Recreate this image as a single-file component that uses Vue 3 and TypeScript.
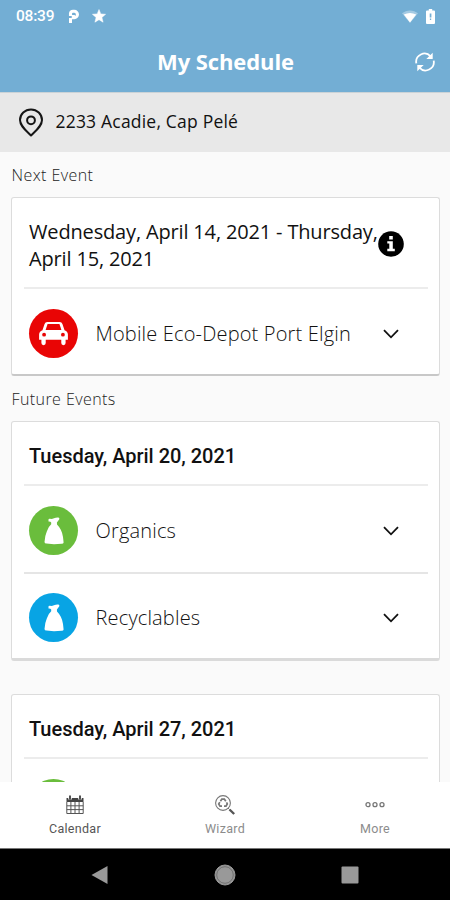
<script setup lang="ts">
interface Pickup {
  name?: string
  color: string
  kind: 'car' | 'bag'
}
interface EventDay {
  date: string
  pickups: Pickup[]
}

const nextEvent: EventDay = {
  date: 'Wednesday, April 14, 2021 - Thursday, April 15, 2021',
  pickups: [{ name: 'Mobile Eco-Depot Port Elgin', color: '#e90505', kind: 'car' }],
}

const futureEvents: EventDay[] = [
  {
    date: 'Tuesday, April 20, 2021',
    pickups: [
      { name: 'Organics', color: '#6abd3c', kind: 'bag' },
      { name: 'Recyclables', color: '#08a4e4', kind: 'bag' },
    ],
  },
  {
    date: 'Tuesday, April 27, 2021',
    pickups: [{ color: '#6abd3c', kind: 'bag' }],
  },
]
</script>

<template>
  <div class="phone">
    <header class="top">
      <div class="status">
        <span class="clock">08:39</span>
        <svg class="parking" width="12" height="15" viewBox="0 0 12 15">
          <path d="M2.500 14V9" fill="none" stroke="#fff" stroke-width="3" />
          <path d="M2.500 7V4.500A2.500 2.500 0 0 1 5 2.300H6.300A3.100 3.100 0 0 1 6.300 8.600H5.300V6" fill="none" stroke="#fff" stroke-width="3.100" />
        </svg>
        <svg class="star" width="14" height="14" viewBox="0 0 14 14">
          <path d="M7 .5 8.800 4.900l4.800.4-3.700 3.100 1.200 4.800L7 10.700l-4.100 2.500 1.200-4.800L.4 5.300l4.800-.4z" fill="#fff" stroke="#fff" stroke-width=".5" />
        </svg>
        <span class="spacer"></span>
        <svg class="wifi" width="16" height="13" viewBox="0 0 16 13">
          <path d="M0 3.300C4.500-.6 11.500-.6 16 3.300L8 13z" fill="#fff" opacity=".35" />
          <path d="M1.800 4.500Q8 1.300 14.200 4.500L8 12.500z" fill="#fff" />
        </svg>
        <svg class="battery" width="9" height="15" viewBox="0 0 9 15">
          <path d="M2.800 0h3.400v1.500H8A1 1 0 0 1 9 2.500V14a1 1 0 0 1-1 1H1a1 1 0 0 1-1-1V2.500a1 1 0 0 1 1-1h1.800z" fill="#fff" />
          <path d="M3.700 4.500h1.700v4H3.700zM3.900 9.500h1.300V11H3.900z" fill="#73aed4" />
        </svg>
      </div>
      <div class="titlebar">
        <h1>My Schedule</h1>
        <svg class="refresh" width="20" height="20" viewBox="0 0 20 20">
          <g fill="none" stroke="#fff" stroke-width="1.800">
            <path d="M1.300 11.300A8.300 8.300 0 0 1 15.600 4.300" />
            <path d="M18.700 8.700A8.300 8.300 0 0 1 4.400 15.700" />
          </g>
          <path d="M17.700.7v6.400h-6.400zM2.300 19.300v-6.400h6.400z" fill="#fff" />
        </svg>
      </div>
    </header>

    <div class="address">
      <svg width="26" height="30" viewBox="0 0 26 30">
        <g fill="none" stroke="#161616" stroke-width="2">
          <path d="M13 27.500C8 22.500 2 18 2 12.100a11 10.700 0 0 1 22 0C24 18 18 22.500 13 27.500z" stroke-linejoin="round" />
          <circle cx="13" cy="12.300" r="3.900" />
        </g>
      </svg>
      <span>2233 Acadie, Cap Pelé</span>
    </div>

    <main class="list">
      <h2 class="section">Next Event</h2>
      <section class="card next">
        <div class="date range">
          <span class="range-text">{{ nextEvent.date }}</span>
          <svg class="info" width="26" height="26" viewBox="0 0 26 26">
            <circle cx="13" cy="13" r="12.800" fill="#000" />
            <path d="M11.200 5h3.600v3.500h-3.600zM9.300 10.200h5.500v7.600h2v2.400H9.300v-2.400h2v-5.200h-2z" fill="#fff" />
          </svg>
        </div>
        <div v-for="p in nextEvent.pickups" :key="p.name" class="row">
          <span class="badge" :style="{ background: p.color }">
            <svg width="29" height="24" viewBox="0 0 30 25">
              <path d="M8.500 0h13a3 3 0 0 1 2.800 2l2.200 6.500Q30 9.800 30 13v5.500h-2.400V22a2.200 2.200 0 0 1-4.500 0v-3.500H6.900V22a2.200 2.200 0 0 1-4.500 0v-3.500H0V13Q0 9.800 3.500 8.500L5.700 2a3 3 0 0 1 2.800-2z" fill="#fff" />
              <path d="M8.800 2.200h12.400l2 6.100H6.800z" :fill="p.color" />
              <circle cx="5.200" cy="13.200" r="2" :fill="p.color" />
              <circle cx="24.800" cy="13.200" r="2" :fill="p.color" />
            </svg>
          </span>
          <span class="name">{{ p.name }}</span>
          <svg class="chevron" width="16" height="10" viewBox="0 0 16 10"><path d="M1 1.200 8 8.300 15 1.200" /></svg>
        </div>
      </section>

      <h2 class="section">Future Events</h2>
      <section v-for="day in futureEvents" :key="day.date" class="card">
        <div class="date single">{{ day.date }}</div>
        <div v-for="p in day.pickups" :key="p.color" class="row">
          <span class="badge" :style="{ background: p.color }">
            <svg width="20" height="28" viewBox="0 0 20 28">
              <path d="M4.500 3Q4.200 1.600 6 1.800 8 2.300 10 1.200 12 .4 14 .5 15.800.3 15.300 2.200L12.900 5.600 13 7.500Q18 12.500 19 20L19.600 25.500Q19.500 26.800 17.500 26.700L10 27.300 2.500 26.500Q.5 26.500.5 25 .8 19 2.800 14.500 4.500 9.500 7.200 7.300V5.500Q6.500 4.300 4.500 4.500z" fill="#fff" />
            </svg>
          </span>
          <span class="name">{{ p.name }}</span>
          <svg class="chevron" width="16" height="10" viewBox="0 0 16 10"><path d="M1 1.200 8 8.300 15 1.200" /></svg>
        </div>
      </section>
    </main>

    <nav class="tabs">
      <div class="tab active">
        <svg width="18" height="20" viewBox="0 0 18 20">
          <path d="M.5 3h17v4H.5z" fill="#444" />
          <path d="M4 .5v4M14 .5v4" stroke="#fff" stroke-width="3.500" />
          <path d="M4 .5v4M14 .5v4" stroke="#333" stroke-width="1.700" />
          <path d="M.8 7v11.500h16.400V7M.8 10.800h16.400M.8 14.600h16.400M4.900 7v11.500M9 7v11.500M13.100 7v11.500" fill="none" stroke="#555" stroke-width="1" />
        </svg>
        <span>Calendar</span>
      </div>
      <div class="tab wizard">
        <svg width="22" height="20" viewBox="0 0 22 20">
          <g fill="none" stroke="#777">
            <circle cx="9" cy="8" r="7.400" stroke-width="1.100" />
            <path d="M6.400 6.200 7.800 4.200h2.600l1.400 2M12.500 7.300l.8 1.700-1.300 2.200h-2M8 11.200H6L4.700 9l1.100-1.900" stroke-width="1.700" />
            <path d="m14 13 1.500 1.500" stroke-width="1" />
            <path d="m15.500 14.500 4.700 4.500" stroke="#555" stroke-width="2.400" />
          </g>
        </svg>
        <span>Wizard</span>
      </div>
      <div class="tab more">
        <svg width="20" height="20" viewBox="0 0 20 20">
          <g fill="none" stroke="#777" stroke-width="1.300">
            <circle cx="3" cy="9.700" r="2" /><circle cx="10" cy="9.700" r="2" /><circle cx="17" cy="9.700" r="2" />
          </g>
        </svg>
        <span>More</span>
      </div>
    </nav>

    <div class="system">
      <div><svg width="18" height="20" viewBox="0 0 18 20"><path d="M.5 10 16.500 1v18z" fill="#999" /></svg></div>
      <div>
        <svg width="22" height="22" viewBox="0 0 22 22">
          <circle cx="11" cy="11" r="10" fill="#999" stroke="#999" />
          <circle cx="11" cy="11" r="8.300" fill="none" stroke="#666" stroke-width=".8" />
        </svg>
      </div>
      <div><svg width="18" height="18" viewBox="0 0 18 18"><rect x=".5" y=".5" width="17" height="17" rx="1" fill="#999" /></svg></div>
    </div>
  </div>
</template>

<style>
body {
  margin: 0;
}
</style>

<style scoped>
.phone {
  width: 450px;
  height: 900px;
  display: flex;
  flex-direction: column;
  overflow: hidden;
  background: #fafafa;
  color: #111;
  font-family: 'Open Sans', 'Noto Sans', sans-serif;
}
svg {
  display: block;
  flex: none;
}
.top {
  height: 92px;
  flex: none;
  background: #73aed4;
  color: #fff;
}
.status {
  height: 32px;
  display: flex;
  align-items: center;
  padding: 0 15px 0 16px;
}
.clock {
  font: 500 15.500px/32px Roboto, sans-serif;
  letter-spacing: -0.200px;
  width: 52px;
}
.star {
  margin-left: 12px;
}
.spacer {
  flex: 1;
}
.battery {
  margin-left: 8px;
}
.titlebar {
  height: 60px;
  display: grid;
  grid-template-columns: 1fr auto 1fr;
  align-items: center;
  padding: 0 15px 0 16px;
}
h1 {
  grid-column: 2;
  margin: 0;
  font-size: 22px;
  line-height: 59px;
  height: 60px;
  font-weight: 700;
  letter-spacing: -0.100px;
}
.refresh {
  justify-self: end;
}
.address {
  height: 60px;
  flex: none;
  display: flex;
  align-items: center;
  gap: 11.500px;
  padding-left: 18px;
  box-sizing: border-box;
  background: #e8e8e8;
  border-top: 1px solid #cbd3d7;
  font-size: 17.500px;
  letter-spacing: 0.200px;
  line-height: 24px;
}
.address span {
  margin-top: -4px;
}
.list {
  flex: 1;
  min-height: 0;
  overflow: hidden;
  padding: 0 10px 0 11px;
}
.section {
  margin: 0 0 0 0.500px;
  height: 45px;
  line-height: 47px;
  font-size: 16px;
  letter-spacing: 0.420px;
  font-weight: 300;
  color: #222;
}
.card {
  box-sizing: border-box;
  height: 240px;
  padding: 0 11px 0 12px;
  background: #fff;
  border: 1px solid #dcdcdc;
  border-bottom: 3px solid #dadada;
  border-radius: 3px;
  margin-bottom: 33px;
}
.card.next {
  height: 179px;
  margin-bottom: 0;
  border-bottom: 2px solid #c8c8c8;
}
.date {
  border-bottom: 2px solid #ececec;
  padding-left: 5px;
}
.single {
  height: 62px;
  font: 500 20px/68px Roboto, sans-serif;
  letter-spacing: -0.020px;
}
.range {
  height: 89px;
  display: flex;
  align-items: center;
  font-size: 20px;
  line-height: 27px;
  letter-spacing: -0.160px;
}
.range-text {
  width: 350px;
  flex: none;
  margin-top: 4px;
}
.info {
  margin-left: -1px;
  margin-top: 3px;
}
.row {
  box-sizing: border-box;
  height: 86px;
  display: flex;
  align-items: center;
  padding: 3px 29px 0 5px;
}
.row + .row {
  border-top: 2px solid #e5e5e5;
}
.badge {
  width: 49px;
  height: 49px;
  flex: none;
  border-radius: 50%;
  display: flex;
  align-items: center;
  justify-content: center;
}
.name {
  flex: 1;
  margin-left: 17.500px;
  font-size: 20px;
  letter-spacing: 0.170px;
  font-weight: 300;
  white-space: nowrap;
}
.chevron path {
  fill: none;
  stroke: #111;
  stroke-width: 1.800;
}
.tabs {
  height: 66px;
  flex: none;
  display: grid;
  grid-template-columns: repeat(3, 1fr);
  background: #fff;
}
.tab {
  display: flex;
  flex-direction: column;
  align-items: center;
  padding-top: 13px;
  font: 400 12.500px/20px Roboto, sans-serif;
  letter-spacing: 0.300px;
  color: #8c8c8c;
}
.tab span {
  margin-top: 4px;
}
.tab.active {
  color: #555;
}
.system {
  height: 52px;
  flex: none;
  display: grid;
  grid-template-columns: repeat(3, 125px);
  justify-content: center;
  align-items: center;
  background: #000;
  border-top: 1px solid #777;
  box-sizing: border-box;
}
.system div {
  display: flex;
  justify-content: center;
}
</style>
